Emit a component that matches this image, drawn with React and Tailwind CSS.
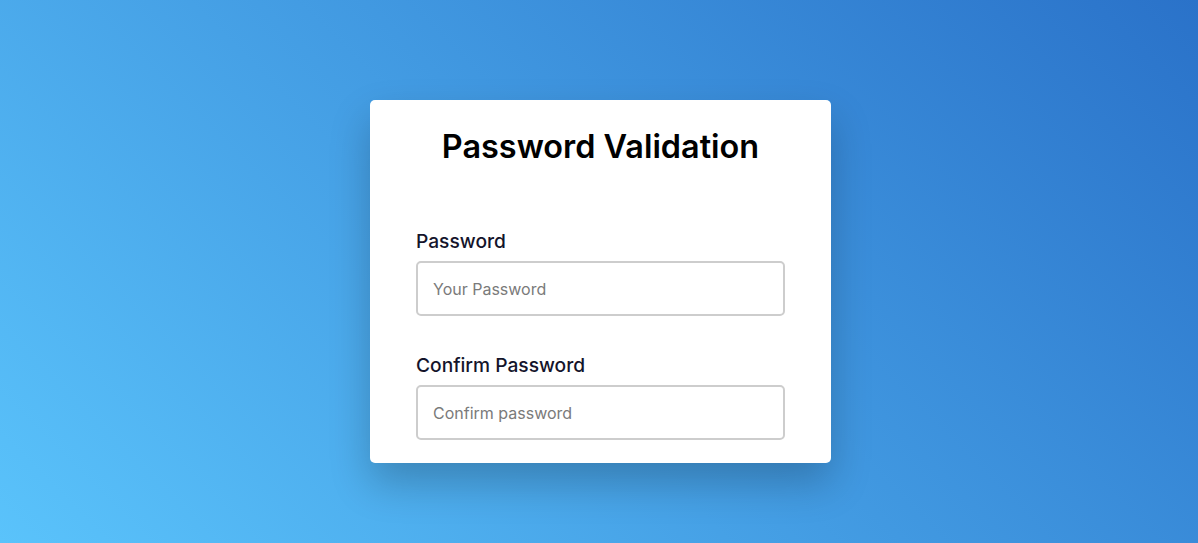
export default function App() {
  return (
    <div className="w-full h-[543px] bg-[linear-gradient(45deg,#5ac3fb,#2a72c9)] flex items-start justify-center pt-[100px] pl-[3px] font-['Inter',sans-serif]">
      <div className="w-[461px] h-[363px] bg-white rounded-[5px] shadow-[0_20px_40px_rgba(0,0,0,0.22)] px-[46px] pt-[26px]">
        <h1 className="text-center text-[32.4px] leading-[42px] font-semibold text-black">Password Validation</h1>
        <div className="mt-[59px] flex flex-col">
          <label className="text-[19.2px] leading-[28px] font-medium text-[#14142b]">Password</label>
          <input
            type="password"
            placeholder="Your Password"
            className="mt-[6px] w-full h-[55px] border-2 border-[#cdcdcd] rounded-[5px] px-[15px] text-[16px] placeholder:text-[#7a7a7a] outline-none"
          />
          <label className="mt-[35px] text-[19.2px] leading-[28px] font-medium text-[#14142b]">Confirm Password</label>
          <input
            type="password"
            placeholder="Confirm password"
            className="mt-[6px] w-full h-[55px] border-2 border-[#cdcdcd] rounded-[5px] px-[15px] text-[16px] placeholder:text-[#7a7a7a] outline-none"
          />
        </div>
      </div>
    </div>
  );
}
